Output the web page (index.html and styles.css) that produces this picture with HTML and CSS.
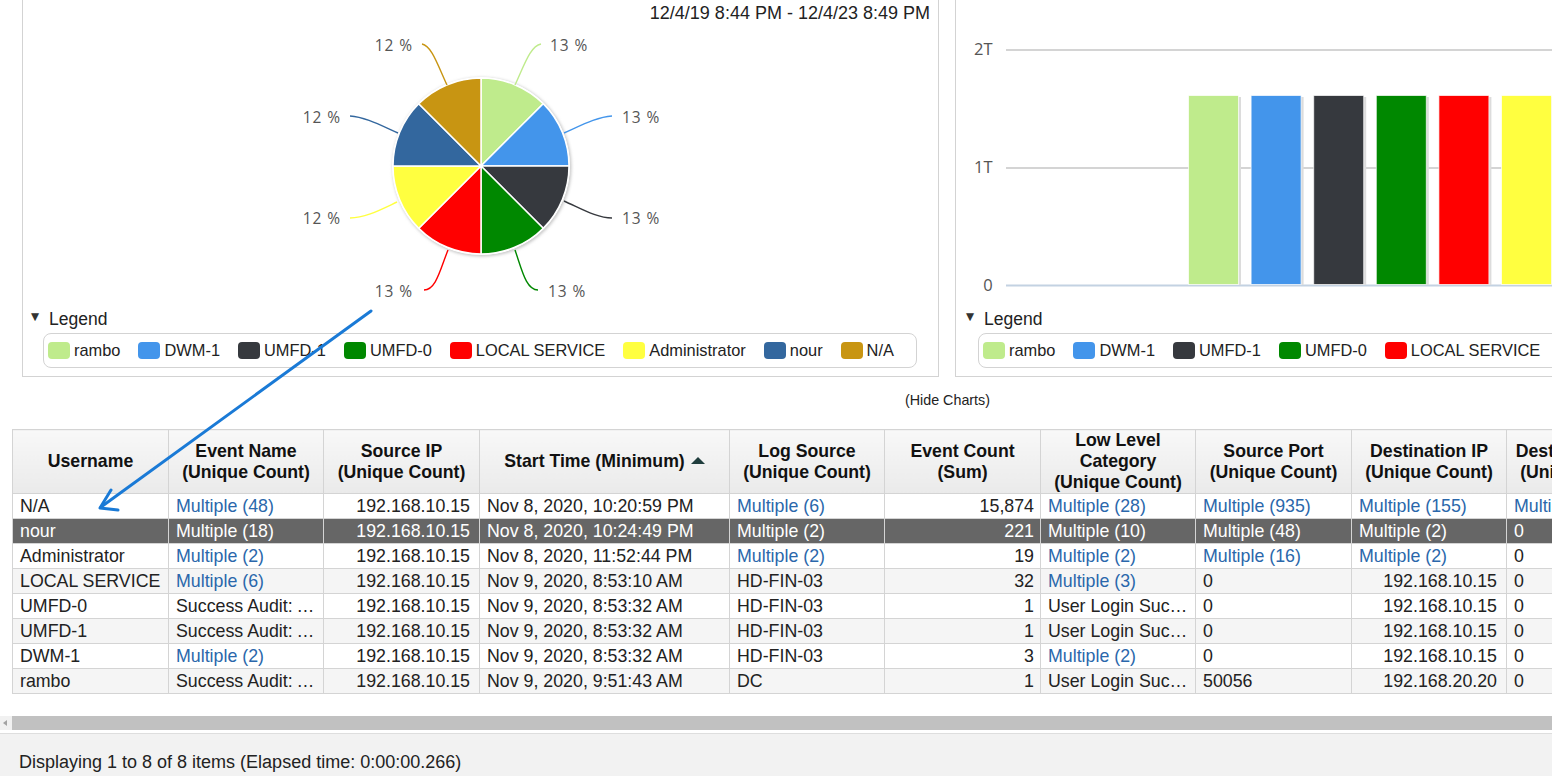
FILE: index.html
```html
<!DOCTYPE html>
<html lang="en">
<head>
<meta charset="utf-8">
<title>Event search</title>
<link rel="stylesheet" href="styles.css">
</head>
<body>
<div class="page">
  <div class="charts">
    <div class="panel pie-panel">
      <div class="range">12/4/19 8:44 PM - 12/4/23 8:49 PM</div>
      <svg class="chart" viewBox="23 24 915 280" width="915" height="280">
        <defs>
          <filter id="pshadow" x="-20%" y="-20%" width="140%" height="140%">
            <feGaussianBlur stdDeviation="1.6"/>
          </filter>
        </defs>
        <circle cx="482" cy="167" r="89.5" fill="#c8c8c8" filter="url(#pshadow)"/>
        <circle cx="481" cy="166" r="89" fill="#fff"/>
        <g stroke="#fff" stroke-width="1.5" stroke-linejoin="round">
          <path fill="#bfeb8c" d="M481 166 L481 78 A88 88 0 0 1 543.23 103.77 Z"/>
          <path fill="#4395eb" d="M481 166 L543.23 103.77 A88 88 0 0 1 569 166 Z"/>
          <path fill="#36393e" d="M481 166 L569 166 A88 88 0 0 1 543.23 228.23 Z"/>
          <path fill="#008800" d="M481 166 L543.23 228.23 A88 88 0 0 1 481 254 Z"/>
          <path fill="#ff0000" d="M481 166 L481 254 A88 88 0 0 1 418.77 228.23 Z"/>
          <path fill="#ffff40" d="M481 166 L418.77 228.23 A88 88 0 0 1 393 166 Z"/>
          <path fill="#33679e" d="M481 166 L393 166 A88 88 0 0 1 418.77 103.77 Z"/>
          <path fill="#c89512" d="M481 166 L418.77 103.77 A88 88 0 0 1 481 78 Z"/>
        </g>
        <g fill="none" stroke-width="1.4">
          <path stroke="#bfeb8c" d="M515 85 C524 66 530 46 541 44"/>
          <path stroke="#4395eb" d="M564 133 C582 125 597 117 612 116"/>
          <path stroke="#36393e" d="M564 201 C582 209 597 218 612 218"/>
          <path stroke="#008800" d="M515 250 C522 270 526 290 538 290"/>
          <path stroke="#ff0000" d="M448 250 C440 270 436 290 424 290"/>
          <path stroke="#ffff40" d="M397 202 C380 210 365 218 350 218"/>
          <path stroke="#33679e" d="M398 133 C380 125 365 117 350 116"/>
          <path stroke="#c89512" d="M447 85 C438 66 432 46 422 44"/>
        </g>
        <g class="plabel">
          <text x="550" y="51">13 %</text>
          <text x="622" y="123">13 %</text>
          <text x="622" y="224">13 %</text>
          <text x="548" y="297">13 %</text>
          <text x="413" y="297" text-anchor="end">13 %</text>
          <text x="341" y="224" text-anchor="end">12 %</text>
          <text x="341" y="123" text-anchor="end">12 %</text>
          <text x="413" y="51" text-anchor="end">12 %</text>
        </g>
      </svg>
      <div class="legend-title"><span class="tri">&#9660;</span>Legend</div>
      <div class="legend">
        <span class="item"><span class="sw c1"></span>rambo</span>
        <span class="item"><span class="sw c2"></span>DWM-1</span>
        <span class="item"><span class="sw c3"></span>UMFD-1</span>
        <span class="item"><span class="sw c4"></span>UMFD-0</span>
        <span class="item"><span class="sw c5"></span>LOCAL SERVICE</span>
        <span class="item"><span class="sw c6"></span>Administrator</span>
        <span class="item"><span class="sw c7"></span>nour</span>
        <span class="item"><span class="sw c8"></span>N/A</span>
      </div>
    </div>
    <div class="panel bar-panel">
      <div class="range"></div>
      <svg class="chart" viewBox="956 24 915 280" width="915" height="280">
        <g class="plabel axis" text-anchor="end">
          <text x="993" y="55">2T</text>
          <text x="993" y="173">1T</text>
          <text x="993" y="291">0</text>
        </g>
        <line x1="1006" y1="50" x2="1871" y2="50" stroke="#c6c6c6" stroke-width="1.5"/>
        <line x1="1006" y1="168" x2="1871" y2="168" stroke="#c6c6c6" stroke-width="1.5"/>
        <line x1="1006" y1="285.5" x2="1871" y2="285.5" stroke="#c3d2e2" stroke-width="2"/>
        <g fill="#dcdcdc">
          <rect x="1190" y="97" width="51" height="188"/>
          <rect x="1252.6" y="97" width="51" height="188"/>
          <rect x="1315.2" y="97" width="51" height="188"/>
          <rect x="1377.8" y="97" width="51" height="188"/>
          <rect x="1440.4" y="97" width="51" height="188"/>
          <rect x="1503" y="97" width="51" height="188"/>
          <rect x="1565.6" y="97" width="51" height="188"/>
          <rect x="1628.2" y="97" width="51" height="188"/>
        </g>
        <g stroke="#ffffff" stroke-opacity="0.7" stroke-width="1">
          <rect x="1188.5" y="95.5" width="50" height="189" fill="#bfeb8c"/>
          <rect x="1251.1" y="95.5" width="50" height="189" fill="#4395eb"/>
          <rect x="1313.7" y="95.5" width="50" height="189" fill="#36393e"/>
          <rect x="1376.3" y="95.5" width="50" height="189" fill="#008800"/>
          <rect x="1438.9" y="95.5" width="50" height="189" fill="#ff0000"/>
          <rect x="1501.5" y="95.5" width="50" height="189" fill="#ffff40"/>
          <rect x="1564.1" y="95.5" width="50" height="189" fill="#33679e"/>
          <rect x="1626.7" y="95.5" width="50" height="189" fill="#c89512"/>
        </g>
      </svg>
      <div class="legend-title"><span class="tri">&#9660;</span>Legend</div>
      <div class="legend">
        <span class="item"><span class="sw c1"></span>rambo</span>
        <span class="item"><span class="sw c2"></span>DWM-1</span>
        <span class="item"><span class="sw c3"></span>UMFD-1</span>
        <span class="item"><span class="sw c4"></span>UMFD-0</span>
        <span class="item"><span class="sw c5"></span>LOCAL SERVICE</span>
        <span class="item"><span class="sw c6"></span>Administrator</span>
        <span class="item"><span class="sw c7"></span>nour</span>
        <span class="item"><span class="sw c8"></span>N/A</span>
      </div>
    </div>
  </div>
  <div class="hide-charts">(Hide Charts)</div>
  <table class="grid">
    <colgroup>
      <col class="w156"><col class="w155"><col class="w156"><col class="w250"><col class="w155">
      <col class="w156"><col class="w155"><col class="w156"><col class="w155"><col class="w155">
    </colgroup>
    <thead>
      <tr>
        <th>Username</th>
        <th>Event Name<br>(Unique Count)</th>
        <th>Source IP<br>(Unique Count)</th>
        <th>Start Time (Minimum)<span class="sort"></span></th>
        <th>Log Source<br>(Unique Count)</th>
        <th>Event Count<br>(Sum)</th>
        <th>Low Level<br>Category<br>(Unique Count)</th>
        <th>Source Port<br>(Unique Count)</th>
        <th>Destination IP<br>(Unique Count)</th>
        <th>Destination Port<br>(Unique Count)</th>
      </tr>
    </thead>
    <tbody>
      <tr>
        <td>N/A</td><td class="lnk">Multiple (48)</td><td class="ip">192.168.10.15</td><td>Nov 8, 2020, 10:20:59 PM</td><td class="lnk">Multiple (6)</td><td class="r">15,874</td><td class="lnk">Multiple (28)</td><td class="lnk">Multiple (935)</td><td class="lnk">Multiple (155)</td><td class="lnk">Multiple (3)</td>
      </tr>
      <tr class="sel">
        <td>nour</td><td class="lnk">Multiple (18)</td><td class="ip">192.168.10.15</td><td>Nov 8, 2020, 10:24:49 PM</td><td class="lnk">Multiple (2)</td><td class="r">221</td><td class="lnk">Multiple (10)</td><td class="lnk">Multiple (48)</td><td class="lnk">Multiple (2)</td><td>0</td>
      </tr>
      <tr>
        <td>Administrator</td><td class="lnk">Multiple (2)</td><td class="ip">192.168.10.15</td><td>Nov 8, 2020, 11:52:44 PM</td><td class="lnk">Multiple (2)</td><td class="r">19</td><td class="lnk">Multiple (2)</td><td class="lnk">Multiple (16)</td><td class="lnk">Multiple (2)</td><td>0</td>
      </tr>
      <tr class="alt">
        <td>LOCAL SERVICE</td><td class="lnk">Multiple (6)</td><td class="ip">192.168.10.15</td><td>Nov 9, 2020, 8:53:10 AM</td><td>HD-FIN-03</td><td class="r">32</td><td class="lnk">Multiple (3)</td><td>0</td><td class="ip">192.168.10.15</td><td>0</td>
      </tr>
      <tr>
        <td>UMFD-0</td><td>Success Audit: An account was successfully logged on</td><td class="ip">192.168.10.15</td><td>Nov 9, 2020, 8:53:32 AM</td><td>HD-FIN-03</td><td class="r">1</td><td>User Login Success</td><td>0</td><td class="ip">192.168.10.15</td><td>0</td>
      </tr>
      <tr class="alt">
        <td>UMFD-1</td><td>Success Audit: An account was successfully logged on</td><td class="ip">192.168.10.15</td><td>Nov 9, 2020, 8:53:32 AM</td><td>HD-FIN-03</td><td class="r">1</td><td>User Login Success</td><td>0</td><td class="ip">192.168.10.15</td><td>0</td>
      </tr>
      <tr>
        <td>DWM-1</td><td class="lnk">Multiple (2)</td><td class="ip">192.168.10.15</td><td>Nov 9, 2020, 8:53:32 AM</td><td>HD-FIN-03</td><td class="r">3</td><td class="lnk">Multiple (2)</td><td>0</td><td class="ip">192.168.10.15</td><td>0</td>
      </tr>
      <tr class="alt">
        <td>rambo</td><td>Success Audit: An account was successfully logged on</td><td class="ip">192.168.10.15</td><td>Nov 9, 2020, 9:51:43 AM</td><td>DC</td><td class="r">1</td><td>User Login Success</td><td>50056</td><td class="ip">192.168.20.20</td><td>0</td>
      </tr>
    </tbody>
  </table>
</div>
<div class="hscroll"><span class="arrow-left"></span><span class="thumb"></span></div>
<div class="footer">Displaying 1 to 8 of 8 items (Elapsed time: 0:00:00.266)</div>
<svg class="annot" width="1552" height="776" viewBox="0 0 1552 776">
  <g fill="none" stroke="#1a7ad6" stroke-width="3" stroke-linecap="round" stroke-linejoin="round">
    <path d="M371 311 L101 507"/>
    <path d="M111 490 L100 508 L118 510"/>
  </g>
</svg>
</body>
</html>
```

FILE: styles.css
```css
html, body {
  margin: 0;
  padding: 0;
  overflow: hidden;
  background: #ffffff;
}

body {
  font-family: "Liberation Sans", Arial, sans-serif;
  color: #222;
  width: 1552px;
  height: 776px;
  position: relative;
}

.page {
  margin-left: 12px;
  width: 1871px;
}

.charts {
  display: flex;
  gap: 16px;
  padding: 0 10px;
}

.panel {
  width: 917px;
  flex: 0 0 917px;
  box-sizing: border-box;
  border: 1px solid #d3d3d3;
  border-top: none;
  display: flex;
  flex-direction: column;
}

.range {
  height: 24px;
  line-height: 26px;
  text-align: right;
  padding-right: 8px;
  font-size: 18px;
  color: #222;
}

.chart {
  display: block;
  width: 915px;
  height: 280px;
}

.plabel text {
  font-family: "Open Sans", "DejaVu Sans", sans-serif;
  font-size: 15.5px;
  letter-spacing: 0.9px;
  fill: #555;
}

.plabel.axis text {
  font-size: 16.5px;
  letter-spacing: 0.3px;
}

.legend-title {
  height: 20px;
  margin-top: 5px;
  line-height: 20px;
  padding-left: 8px;
  font-size: 17.5px;
  color: #222;
  display: flex;
  align-items: center;
}

.bar-panel .legend-title {
  padding-left: 10px;
}

.tri {
  font-family: "DejaVu Sans", sans-serif;
  font-size: 10.5px;
  color: #333;
  margin-right: 10px;
  position: relative;
  top: -3px;
}

.legend {
  margin: 4px 0 8px 20px;
  width: 874px;
  height: 35px;
  box-sizing: border-box;
  border: 1px solid #d3d3d3;
  border-radius: 8px;
  padding-left: 4px;
  display: flex;
  align-items: center;
  white-space: nowrap;
  font-size: 16.4px;
  color: #222;
}

.bar-panel .legend {
  margin-left: 22px;
}

.item {
  display: flex;
  align-items: center;
  margin-right: 18px;
}

.sw {
  width: 22px;
  height: 17px;
  border-radius: 4px;
  margin-right: 4px;
}

.c1 { background: #bfeb8c; }
.c2 { background: #4395eb; }
.c3 { background: #36393e; }
.c4 { background: #008800; }
.c5 { background: #ff0000; }
.c6 { background: #ffff40; }
.c7 { background: #33679e; }
.c8 { background: #c89512; }

.hide-charts {
  margin-top: 14px;
  height: 18px;
  line-height: 18px;
  text-align: center;
  font-size: 14.3px;
  color: #222;
}

.grid {
  margin-top: 20px;
  border-collapse: collapse;
  table-layout: fixed;
  width: 1649px;
  font-size: 17.8px;
}

.w156 { width: 156px; }
.w155 { width: 155px; }
.w250 { width: 250px; }

.grid th,
.grid td {
  border: 1px solid #d4d4d4;
  white-space: nowrap;
  overflow: hidden;
  text-overflow: ellipsis;
}

.grid th {
  height: 62px;
  padding: 0 6px;
  line-height: 21px;
  font-size: 17.7px;
  font-weight: bold;
  color: #111;
  text-align: center;
  vertical-align: middle;
  background: linear-gradient(#f8f8f8, #eaeaea);
}

.sort {
  display: inline-block;
  width: 0;
  height: 0;
  border-left: 7.5px solid transparent;
  border-right: 7.5px solid transparent;
  border-bottom: 7px solid #1f3d3d;
  margin-left: 6px;
  vertical-align: 3px;
}

.grid td {
  height: 24px;
  padding: 0 2px 0 7px;
  line-height: 22px;
  text-align: left;
  color: #222;
}

.grid td.r {
  text-align: right;
  padding-right: 6px;
}

.grid td.ip {
  text-align: right;
  padding-right: 9px;
}

.grid td.lnk {
  color: #2a67ab;
}

.grid tr.alt td {
  background: #f5f5f5;
}

.grid tr.sel td {
  background: #666666;
  color: #ffffff;
}

.hscroll {
  margin-top: 22px;
  height: 14px;
  background: #f1f1f1;
  display: flex;
  align-items: center;
}

.arrow-left {
  width: 0;
  height: 0;
  border-top: 3.5px solid transparent;
  border-bottom: 3.5px solid transparent;
  border-right: 4px solid #a3a3a3;
  margin: 0 5px 0 3px;
}

.thumb {
  flex: 1;
  height: 14px;
  background: #c1c1c1;
}

.footer {
  margin-top: 3px;
  border-top: 1px solid #dedede;
  background: #f2f2f2;
  height: 60px;
  padding: 17px 0 0 19px;
  box-sizing: border-box;
  font-size: 18px;
  line-height: 22px;
  color: #222;
}

.annot {
  position: absolute;
  left: 0;
  top: 0;
  pointer-events: none;
}
```
